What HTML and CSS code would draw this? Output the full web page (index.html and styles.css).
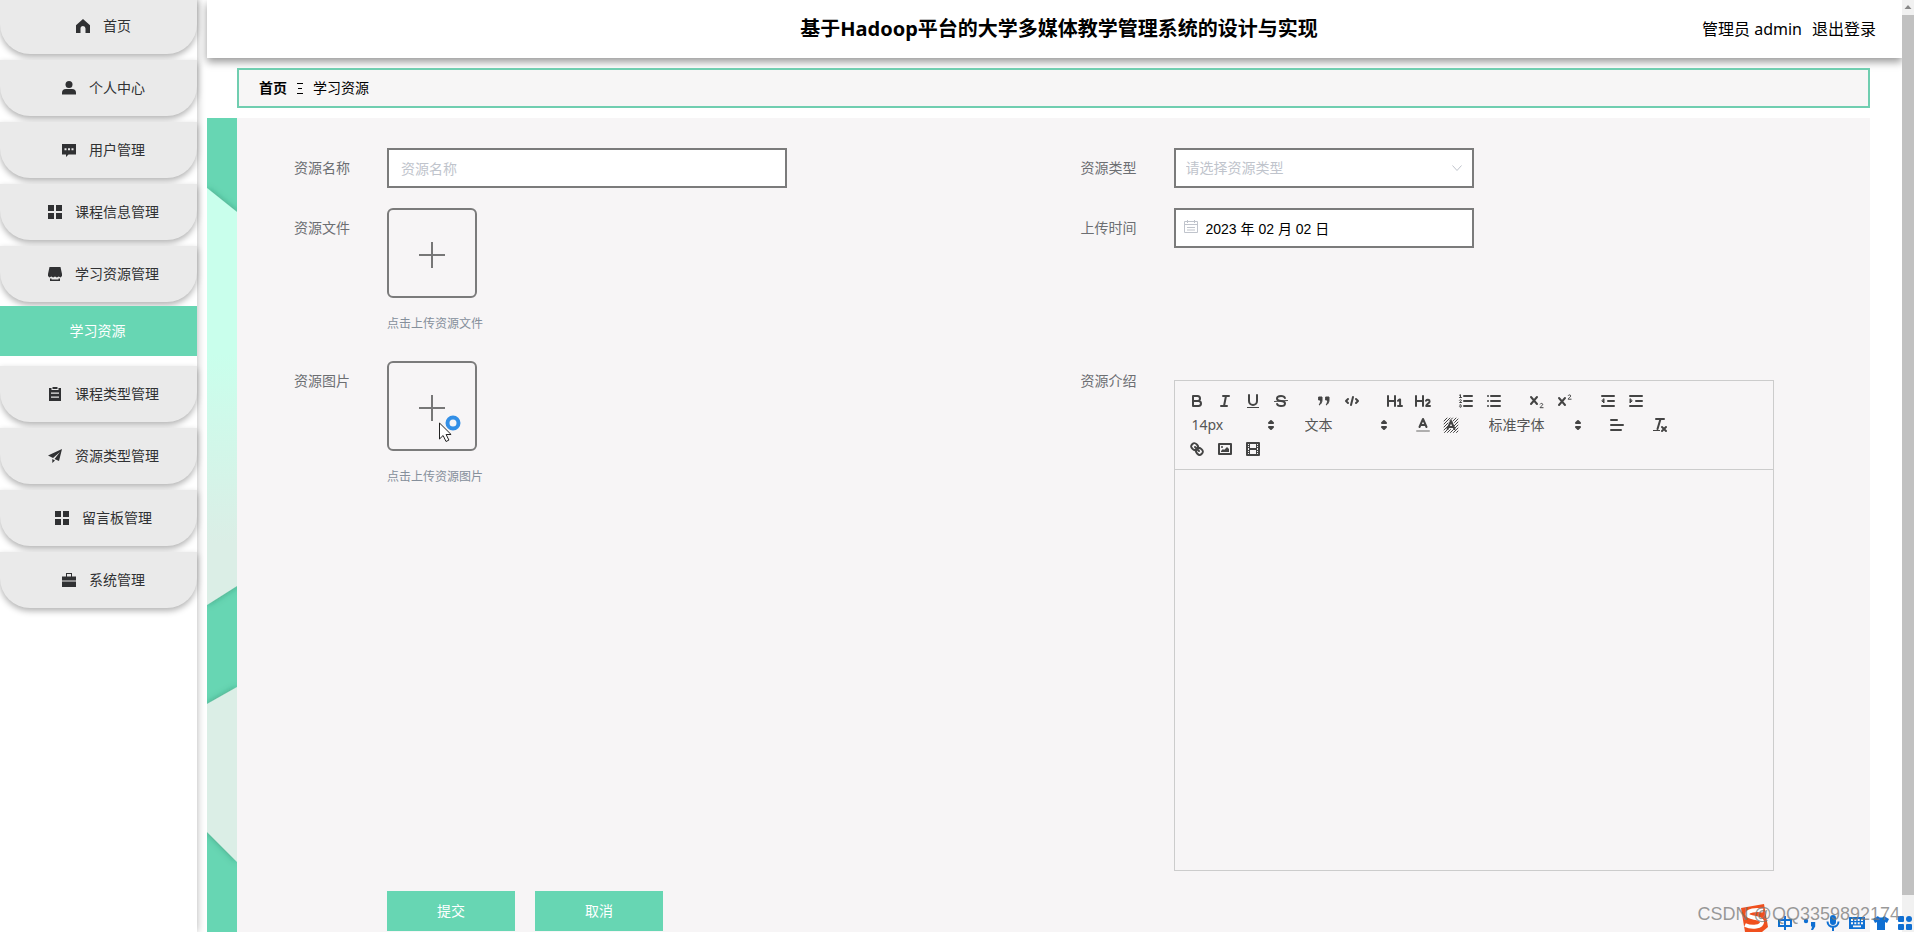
FILE: index.html
```html
<!DOCTYPE html>
<html lang="zh-CN">
<head>
<meta charset="utf-8">
<title>基于Hadoop平台的大学多媒体教学管理系统的设计与实现</title>
<link rel="stylesheet" href="styles.css">
</head>
<body>
<div class="app">
  <nav class="sidebar">
    <a class="item" href="#"><svg class="mi" viewBox="0 0 14 14"><path d="M7 0 14 6.200V14H9.500V9.500a2.500 2.500 0 0 0-5 0V14H0V6.200z"/></svg>首页</a>
    <a class="item" href="#"><svg class="mi" viewBox="0 0 14 14"><circle cx="7" cy="3.500" r="3.500"/><path d="M0 13.500V12a4 4 0 0 1 4-4h6a4 4 0 0 1 4 4v1.500z"/></svg>个人中心</a>
    <a class="item" href="#"><svg class="mi" viewBox="0 0 14 14"><path fill-rule="evenodd" d="M0 1h14v10.500H6.500L4 14v-2.500H0zM2.500 5.200v2h2v-2zM6 5.200v2h2v-2zM9.500 5.200v2h2v-2z"/></svg>用户管理</a>
    <a class="item" href="#"><svg class="mi" viewBox="0 0 14 14"><path d="M0 0h6v6H0zM8 0h6v6H8zM0 8h6v6H0zM8 8h6v6H8z"/></svg>课程信息管理</a>
    <a class="item" href="#"><svg class="mi" viewBox="0 0 14 14"><path d="M1.500 0h11L14 7v2l-1.500 1.500-1.800-1-1.800 1-1.900-1-1.900 1-1.800-1-1.800 1L0 9V7zM2 11.500h1.500v1h7v-1H12V14H2z"/></svg>学习资源管理</a>
    <a class="sub" href="#">学习资源</a>
    <a class="item" href="#"><svg class="mi" viewBox="0 0 14 14"><path fill-rule="evenodd" d="M1 1h2.500v2h7V1H13v13H1zM3 5.500v1.300h8V5.500zM3 9.500v1.300h8V9.500zM4.500 0h5v2h-5z"/></svg>课程类型管理</a>
    <a class="item" href="#"><svg class="mi" viewBox="0 0 14 14"><path d="M0 6.500 14 0l-3 12-4.500-2L12 3 5 9zM4.300 10l2.700 1.500L4.300 14z"/></svg>资源类型管理</a>
    <a class="item" href="#"><svg class="mi" viewBox="0 0 14 14"><path d="M0 0h6v6H0zM8 0h6v6H8zM0 8h6v6H0zM8 8h6v6H8z"/></svg>留言板管理</a>
    <a class="item" href="#"><svg class="mi" viewBox="0 0 14 14"><path fill-rule="evenodd" d="M4 0h6v3.500h4v4H0v-4h4zM5 1v2.500h4V1zM0 8.500h14V14H0z"/></svg>系统管理</a>
  </nav>
  <div class="main">
    <header class="header">
      <h1>基于Hadoop平台的大学多媒体教学管理系统的设计与实现</h1>
      <div class="user"><span>管理员 admin</span><a href="#">退出登录</a></div>
    </header>
    <div class="crumb"><b>首页</b><svg class="sep" viewBox="0 0 6 12"><path d="M0 1.500h6M1 6.500h4M0 11.500h6"/></svg><span>学习资源</span></div>
    <div class="body">
      <svg class="strip" viewBox="0 0 30 814" preserveAspectRatio="none">
        <defs>
          <linearGradient id="mint" x1="0" y1="0" x2="0" y2="1"><stop offset="0" stop-color="#c9ffec"/><stop offset=".4" stop-color="#c9ffec"/><stop offset=".85" stop-color="#dbeee6"/><stop offset="1" stop-color="#dbeee6"/></linearGradient>
          <filter id="soft" x="-50%" y="-10%" width="200%" height="120%"><feDropShadow dx="0" dy="0" stdDeviation="3" flood-color="#1c6b50" flood-opacity=".5"/></filter>
        </defs>
        <path fill="#67d6b3" d="M0 0h30v814H0z"/>
        <path filter="url(#soft)" fill="url(#mint)" d="M0 70 30 94V468L0 487z"/>
        <path filter="url(#soft)" fill="#dbeee6" d="M0 586 30 569V744L0 714z"/>
      </svg>
      <form class="panel">
        <div class="cell">
          <label for="name">资源名称</label>
          <input id="name" class="box wide" type="text" placeholder="资源名称">
        </div>
        <div class="cell">
          <label for="type">资源类型</label>
          <div class="field">
            <select id="type" class="box"><option>请选择资源类型</option></select>
            <svg class="chev" viewBox="0 0 12 12"><path d="m1.500 3.500 4.500 5 4.500-5"/></svg>
          </div>
        </div>
        <div class="cell">
          <label for="file">资源文件</label>
          <div>
            <button id="file" class="upload" type="button" aria-label="上传资源文件"><svg class="plus" viewBox="0 0 28 28"><path d="M1 14h26M14 1v26"/></svg></button>
            <p class="tip">点击上传资源文件</p>
          </div>
        </div>
        <div class="cell">
          <label for="date">上传时间</label>
          <div class="field">
            <svg class="cal" viewBox="0 0 14 14"><path d="M.5 1.500h13v11H.5zM.5 4.500h13M3.500 0v3M10.500 0v3M3 7.500h8M3 10h8"/></svg>
            <input id="date" class="box date" type="text" value="2023 年 02 月 02 日">
          </div>
        </div>
        <div class="cell">
          <label for="pic">资源图片</label>
          <div>
            <div class="field">
              <button id="pic" class="upload" type="button" aria-label="上传资源图片"><svg class="plus" viewBox="0 0 28 28"><path d="M1 14h26M14 1v26"/></svg></button>
              <svg class="cursor" viewBox="0 0 24 28"><circle cx="15" cy="8" r="5.500" fill="none" stroke="#338fe6" stroke-width="4"/><path d="M1.500 8v16l3.600-3.500 2.900 6 2.900-1.400-2.800-5.600h5z" fill="#fff" stroke="#222"/></svg>
            </div>
            <p class="tip">点击上传资源图片</p>
          </div>
        </div>
        <div class="cell">
          <label id="intro">资源介绍</label>
          <div class="editor">
            <div class="tools">
              <div class="group">
                <button type="button" aria-label="粗体"><svg viewBox="0 0 18 18"><path d="M5 4h4.500a2.500 2.500 0 0 1 0 5H5zM5 9h5.500a2.500 2.500 0 0 1 0 5H5z"/></svg></button>
                <button type="button" aria-label="斜体"><svg viewBox="0 0 18 18"><path d="M7 4h6M5 14h6M8 14l2-10"/></svg></button>
                <button type="button" aria-label="下划线"><svg viewBox="0 0 18 18"><path d="M5 3v6a4 4 0 0 0 8 0V3"/><path class="f" d="M3 15h12v1H3z"/></svg></button>
                <button type="button" aria-label="删除线"><svg viewBox="0 0 18 18"><path d="M12.900 6C12.500 4.800 11 4 9 4 6.800 4 5 5.100 5 6.500S6 8.800 9 9s4 1.100 4 2.500S11.200 14 9 14s-3.500-.8-3.900-2"/><path class="t" d="M15.500 8.500l-13 1"/></svg></button>
              </div>
              <div class="group">
                <button type="button" aria-label="引用"><svg viewBox="0 0 18 18"><path class="f s" d="M4 5h3v3c0 4-3 5-3 5 1-1 1.600-2.500 1.600-5H4zM11 5h3v3c0 4-3 5-3 5 1-1 1.600-2.500 1.600-5H11z"/></svg></button>
                <button type="button" aria-label="代码"><svg viewBox="0 0 18 18"><path d="M5 7 3 9l2 2M13 7l2 2-2 2M10 5l-2 8"/></svg></button>
              </div>
              <div class="group">
                <button type="button" aria-label="标题一"><svg viewBox="0 0 18 18"><path d="M2 4v10M9 4v10M2 9h7M12 8.800l1.500-1.200h.6V14M12 14h4"/></svg></button>
                <button type="button" aria-label="标题二"><svg viewBox="0 0 18 18"><path d="M2 4v10M9 4v10M2 9h7M12 8.700c.9-1.300 3.700-1.200 3.600.7 0 1.700-3 2.500-3.400 4.600H16"/></svg></button>
              </div>
              <div class="group">
                <button type="button" aria-label="有序列表"><svg viewBox="0 0 18 18"><path d="M7 4h8M7 9h8M7 14h8"/><path class="t" d="M2.500 3.200l1-.5v2.800M2.500 5.500h2M2.500 8.200c.5-.9 1.900-.7 1.850.1 0 1-1.850 2-1.850 2.200h2M2.500 13.100c.5-.8 1.850-.5 1.850.1 0 .5-.3.800-.8.800.5 0 .8.300.8.700 0 .8-1.500 1-1.850.1"/></svg></button>
                <button type="button" aria-label="无序列表"><svg viewBox="0 0 18 18"><path d="M6 4h9M6 9h9M6 14h9M3 4h.01M3 9h.01M3 14h.01"/></svg></button>
              </div>
              <div class="group">
                <button type="button" aria-label="下标"><svg viewBox="0 0 18 18"><path d="M3 5l6 7M9 5l-6 7"/><path class="t" d="M12.200 12c.6-1 2.600-.8 2.500.5 0 1.200-2.500 1.900-2.600 3.200h3"/></svg></button>
                <button type="button" aria-label="上标"><svg viewBox="0 0 18 18"><path d="M3 6l6 7M9 6l-6 7"/><path class="t" d="M12.200 3.500c.6-1 2.600-.8 2.500.5 0 1.200-2.500 1.900-2.600 3.200h3"/></svg></button>
              </div>
              <div class="group">
                <button type="button" aria-label="减少缩进"><svg viewBox="0 0 18 18"><path d="M3 14h12M3 4h12M9 9h6"/><path class="f s" d="M5 7v4L3 9z"/></svg></button>
                <button type="button" aria-label="增加缩进"><svg viewBox="0 0 18 18"><path d="M3 14h12M3 4h12M9 9h6"/><path class="f s" d="M3 7v4l2-2z"/></svg></button>
              </div>
              <div class="group pick">
                <select aria-label="字号"><option>14px</option></select>
                <svg viewBox="0 0 18 18"><path d="M7 11l2 2 2-2zM7 7l2-2 2 2z"/></svg>
              </div>
              <div class="group pick">
                <select aria-label="段落"><option>文本</option></select>
                <svg viewBox="0 0 18 18"><path d="M7 11l2 2 2-2zM7 7l2-2 2 2z"/></svg>
              </div>
              <div class="group">
                <button type="button" aria-label="文字颜色"><svg viewBox="0 0 18 18"><path opacity=".4" d="M3 15h12"/><path d="M5.500 11 9 3l3.500 8M6.400 9h5.200"/></svg></button>
                <button type="button" aria-label="背景颜色"><svg viewBox="0 0 18 18"><path class="t" d="M2 5l3-3M2 8l6-6M2 11l4-4M2 14l4-4M2.500 16.500l3-3M5.500 16.500l3-3M8.500 16.500l3-3M11.500 16.500l4.500-4.500M13 12l3-3M12 10l4-4M11 5l3-3M12.500 6.500l3.500-3.500M8 4.500 10.500 2M14.500 16.500l1.500-1.500"/><path d="M5.500 13 9 5l3.500 8M6.400 11h5.200"/></svg></button>
              </div>
              <div class="group pick font">
                <select aria-label="字体"><option>标准字体</option></select>
                <svg viewBox="0 0 18 18"><path d="M7 11l2 2 2-2zM7 7l2-2 2 2z"/></svg>
              </div>
              <div class="group">
                <button type="button" aria-label="对齐"><svg viewBox="0 0 18 18"><path d="M3 9h12M3 14h10M3 4h6"/></svg></button>
              </div>
              <div class="group">
                <button type="button" aria-label="清除格式"><svg viewBox="0 0 18 18"><path d="M5 3h8M6.500 13 9.500 3M11 11l4 4M15 11l-4 4"/><path class="f" d="M2 14h7v1H2z"/></svg></button>
              </div>
              <div class="group">
                <button type="button" aria-label="链接"><svg viewBox="0 0 18 18"><path d="M7 7l4 4M8.900 4.577a3.476 3.476 0 0 1 .36 4.679A3.476 3.476 0 0 1 4.577 8.900C3.185 7.500 2.035 6.400 4.217 4.217S7.500 3.185 8.900 4.577zM13.423 9.100a3.476 3.476 0 0 0-4.679-.36 3.476 3.476 0 0 0 .36 4.679c1.392 1.392 2.500 2.542 4.679.36S14.815 10.500 13.423 9.100z"/></svg></button>
                <button type="button" aria-label="图片"><svg viewBox="0 0 18 18"><path d="M3 4h12v10H3z"/><circle class="f" cx="6" cy="7" r="1"/><path class="f" d="M5 12v-1l2-2 1 1 3-3 2 2v3z"/></svg></button>
                <button type="button" aria-label="视频"><svg viewBox="0 0 18 18"><path d="M3 3h12v12H3z"/><path class="f" d="M5 3h1v12H5zM12 3h1v12h-1zM5 8h8v2H5zM3 5h3v1H3zM3 7h3v1H3zM3 10h3v1H3zM3 12h3v1H3zM12 5h3v1h-3zM12 7h3v1h-3zM12 10h3v1h-3zM12 12h3v1h-3z"/></svg></button>
              </div>
            </div>
            <div class="area" contenteditable="true" role="textbox" aria-labelledby="intro"></div>
          </div>
        </div>
        <div class="actions">
          <button class="btn" type="button">提交</button>
          <button class="btn" type="button">取消</button>
        </div>
      </form>
    </div>
  </div>
  <div class="scroll"><svg class="up" viewBox="0 0 12 15"><path d="M2.500 9h7L6 5z"/></svg><div class="thumb"></div></div>
</div>
<div class="ime">
  <svg class="logo" viewBox="0 0 30 28"><path fill="#f0501e" d="M2 4 25 0l4 23-6 5H6z"/><path fill="none" stroke="#fff" stroke-width="4" d="M24 6.500C17 5 8 6.500 8.500 10.500S23 13 23 18 13 24 6 21"/></svg>
  <svg class="tool" viewBox="0 0 16 16"><path class="b" d="M2 5h12v6H2zM8 1v14"/></svg>
  <svg class="tool" viewBox="0 0 16 16"><circle cx="5" cy="6" r="2.200"/><path d="M10 7h4.200v4.500L12 15h-2l1.200-3.500H10z"/></svg>
  <svg class="tool" viewBox="0 0 16 16"><rect x="5" y="0" width="6" height="10" rx="3"/><path class="b" d="M2.500 6.500c0 7 11 7 11 0M8 12v4"/></svg>
  <svg class="tool" viewBox="0 0 16 16"><path fill-rule="evenodd" d="M0 2h16v12H0zM2 4v2h2V4zM5.300 4v2h2V4zM8.700 4v2h2V4zM12 4v2h2V4zM2 7.200v2h2v-2zM5.300 7.200v2h2v-2zM8.700 7.200v2h2v-2zM12 7.200v2h2v-2zM4 10.500v1.700h8v-1.700z"/></svg>
  <svg class="tool" viewBox="0 0 16 16"><path d="M5 1c1 2 5 2 6 0l5 3-2 4-2-1v8H4V7L2 8 0 4z"/></svg>
  <svg class="tool" viewBox="0 0 16 16"><rect x="1" y="1" width="6" height="6" rx="1"/><rect x="9" y="1" width="6" height="6" rx="3"/><rect x="1" y="9" width="6" height="6" rx="1"/><rect x="9" y="9" width="6" height="6" rx="1"/></svg>
</div>
<div class="mark">CSDN @QQ3359892174</div>
</body>
</html>
```

FILE: styles.css
```css
* { box-sizing: border-box; }
body {
  margin: 0;
  height: 100vh;
  overflow: hidden;
  position: relative;
  background: #fff;
  color: #000;
  font: 400 14px/20px "Noto Sans", "Noto Sans CJK SC", sans-serif;
}
a { color: inherit; text-decoration: none; }
button, input, select { font: inherit; color: inherit; }
svg { display: block; flex: none; }

.app { display: flex; height: 100%; }

.sidebar {
  width: 197px;
  flex: none;
  margin-right: 10px;
  margin-top: -2px;
  box-shadow: 0 0 8px rgba(0, 0, 0, .3);
}
.item {
  display: flex;
  align-items: center;
  justify-content: center;
  gap: 13px;
  height: 56px;
  margin-bottom: 6px;
  padding-left: 10px;
  background: #eaeaea;
  color: #303133;
  border-radius: 0 0 30px 30px;
  box-shadow: 0 3px 6px rgba(0, 0, 0, .3);
}
.mi { width: 14px; height: 14px; fill: #303133; }
.sub {
  display: flex;
  align-items: center;
  justify-content: center;
  position: relative;
  height: 50px;
  margin: -2px 0 10px;
  padding-right: 2px;
  background: #67d6b3;
  color: #fff;
}

.main {
  flex: 1;
  min-width: 0;
  display: flex;
  flex-direction: column;
}
.header {
  display: grid;
  grid-template-columns: 1fr auto 1fr;
  align-items: center;
  height: 58px;
  flex: none;
  padding: 0 26px 0 35px;
  background: #fff;
  box-shadow: 0 4px 8px rgba(0, 0, 0, .4);
}
.header h1 { grid-column: 2; margin: 0; font-size: 20px; line-height: 28px; }
.user { display: flex; justify-content: flex-end; gap: 10px; font-size: 16px; }
.crumb {
  display: flex;
  align-items: center;
  gap: 10px;
  height: 40px;
  flex: none;
  margin: 10px 32px 10px 30px;
  padding: 0 20px;
  background: #f7f6f6;
  border: 2px solid #70ceb0;
}
.sep { width: 6px; height: 12px; stroke: #000; fill: none; }

.body { flex: 1; min-height: 0; display: flex; margin-right: 32px; }
.strip { width: 30px; height: 100%; }
.panel {
  flex: 1;
  display: grid;
  grid-template-columns: 1fr 1fr;
  align-content: start;
  row-gap: 20px;
  padding: 30px;
  background: #f7f5f6;
}
.cell { display: flex; align-items: flex-start; }
.cell label { width: 120px; flex: none; padding-right: 37px; line-height: 40px; text-align: right; color: #6c6e72; }
.field { position: relative; }
.box {
  appearance: none;
  display: block;
  width: 300px;
  height: 40px;
  padding: 0 10px;
  background: #fff;
  border: 2px solid #7b7b7b;
  border-radius: 0;
  outline: 0;
}
.wide { width: 400px; padding: 0 12px; }
.wide::placeholder { color: #c0c4cc; }
select.box { color: #c0c4cc; }
.chev { position: absolute; right: 11px; top: 14px; width: 12px; height: 12px; fill: none; stroke: #c0c4cc; }
.date { padding-left: 30px; font: 14px "Liberation Sans", "Noto Sans CJK SC", sans-serif; }
.cal { position: absolute; left: 10px; top: 12px; width: 14px; height: 14px; fill: none; stroke: #c0c4cc; }
.upload {
  display: flex;
  align-items: center;
  justify-content: center;
  width: 90px;
  height: 90px;
  padding: 4px 0 0;
  background: none;
  border: 2px solid #7b7b7b;
  border-radius: 6px;
}
.plus { width: 28px; height: 28px; fill: none; stroke: #777; stroke-width: 2; }
.tip { margin: 16px 0 7px; font-size: 12px; color: #858f9b; }
.cursor { position: absolute; left: 51px; top: 54px; width: 24px; height: 28px; }

.editor { width: 600px; margin-top: 19px; border: 1px solid #ccc; }
.tools { display: flex; flex-wrap: wrap; padding: 8px; border-bottom: 1px solid #ccc; }
.group { display: flex; height: 24px; margin-right: 15px; }
.group button { width: 28px; height: 24px; padding: 3px 5px; background: none; border: 0; }
.group svg { width: 18px; height: 18px; fill: none; stroke: #444; stroke-width: 2; stroke-linejoin: round; stroke-linecap: round; }
.group .f { fill: #444; stroke: none; }
.group .s { stroke: #444; stroke-width: 1; }
.group .t { stroke-width: 1; }
.pick { position: relative; width: 98px; }
.font { width: 108px; }
.pick select { appearance: none; width: 100%; padding: 0 9px; background: none; border: 0; color: #555; }
.group.pick svg { position: absolute; right: 1px; top: 3px; pointer-events: none; }
.area { height: 400px; outline: 0; }

.actions { grid-column: 1 / -1; display: flex; gap: 20px; padding-left: 120px; }
.btn { width: 128px; height: 40px; padding: 0; border: 0; background: #67d6b3; color: #fff; }

.scroll { width: 12px; flex: none; display: flex; flex-direction: column; background: #f1f1f1; padding-bottom: 37px; }
.up { width: 12px; height: 15px; fill: #888; }
.thumb { flex: 1; background: #c1c1c1; }

.ime { position: absolute; right: 0; bottom: 0; display: flex; align-items: flex-end; gap: 8px; padding-right: 1px; }
.logo { width: 30px; height: 28px; }
.tool { width: 16px; height: 16px; margin-bottom: 1px; fill: #0f6fd2; }
.tool .b { fill: none; stroke: #0f6fd2; stroke-width: 2; }
.mark {
  position: absolute;
  right: 14px;
  bottom: 8px;
  font: 18px/20px "Liberation Sans", sans-serif;
  color: rgba(120, 120, 120, .75);
}
```
